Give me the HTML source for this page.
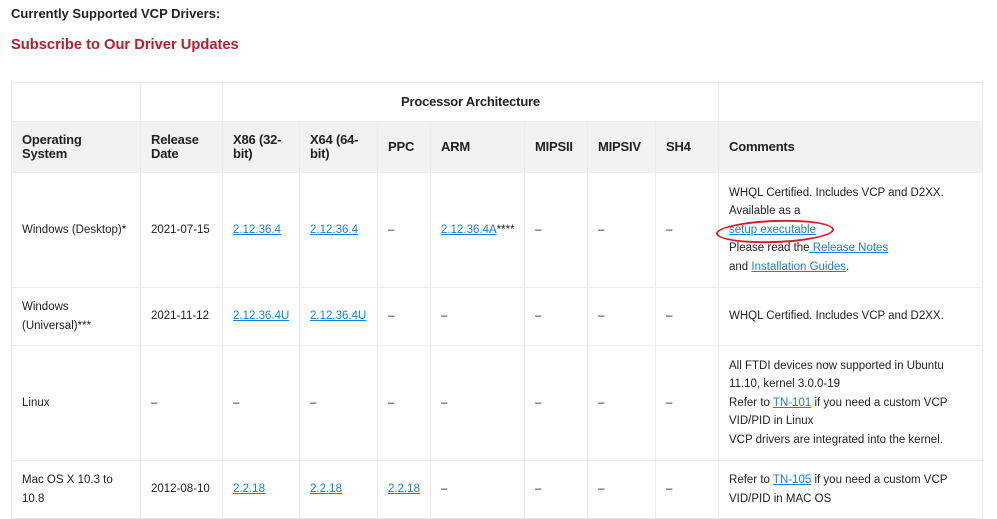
<!DOCTYPE html>
<html><head><style>
body{margin:0;background:#fff;font-family:"Liberation Sans",Arial,sans-serif;color:#222;width:997px;height:519px;overflow:hidden;position:relative}
h1{position:absolute;left:11px;top:6px;margin:0;font-size:13px;font-weight:bold;color:#222}
h2{position:absolute;left:11px;top:37px;margin:0;font-size:14.7px;font-weight:bold;color:#b5202a}
table{position:absolute;left:11px;top:82px;border-collapse:collapse;table-layout:fixed;width:971px}
td,th{border:1px solid #ececec;padding:0 0 0 10px;font-size:11.5px;line-height:18.5px;vertical-align:middle;text-align:left}
th{font-size:13px;font-weight:bold;line-height:14px;color:#222;letter-spacing:-0.2px}
tr.g th{background:#f2f2f2}
a{color:#1a80d8;text-decoration:underline}
.c{position:relative}
.oval{position:absolute;left:-13px;top:36px;width:114px;height:19px;border:2px solid #d81e25;border-radius:50%;transform:rotate(-2deg)}
</style></head><body>
<h1>Currently Supported VCP Drivers:</h1>
<h2>Subscribe to Our Driver Updates</h2>
<table>
<colgroup><col style="width:129px"><col style="width:82px"><col style="width:77px"><col style="width:78px"><col style="width:53px"><col style="width:94px"><col style="width:63px"><col style="width:68px"><col style="width:63px"><col style="width:264px"></colgroup>
<tr style="height:39px"><th></th><th></th><th colspan="7" style="text-align:center;padding:0">Processor Architecture</th><th></th></tr>
<tr class="g" style="height:51px"><th>Operating<br>System</th><th>Release<br>Date</th><th>X86 (32-<br>bit)</th><th>X64 (64-<br>bit)</th><th>PPC</th><th>ARM</th><th>MIPSII</th><th>MIPSIV</th><th>SH4</th><th>Comments</th></tr>
<tr style="height:115px"><td>Windows (Desktop)*</td><td>2021-07-15</td><td><a>2.12.36.4</a></td><td><a>2.12.36.4</a></td><td>–</td><td><a>2.12.36.4A</a>****</td><td>–</td><td>–</td><td>–</td><td><div class="c">WHQL Certified. Includes VCP and D2XX.<br>Available as a<br><a>setup executable</a><br>Please read the<a> Release Notes</a><br>and <a>Installation Guides</a>.<div class="oval"></div></div></td></tr>
<tr style="height:58px"><td>Windows<br>(Universal)***</td><td>2021-11-12</td><td><a>2.12.36.4U</a></td><td><a>2.12.36.4U</a></td><td>–</td><td>–</td><td>–</td><td>–</td><td>–</td><td>WHQL Certified. Includes VCP and D2XX.</td></tr>
<tr style="height:115px"><td>Linux</td><td>–</td><td>–</td><td>–</td><td>–</td><td>–</td><td>–</td><td>–</td><td>–</td><td>All FTDI devices now supported in Ubuntu<br>11.10, kernel 3.0.0-19<br>Refer to <a>TN-101</a> if you need a custom VCP<br>VID/PID in Linux<br>VCP drivers are integrated into the kernel.</td></tr>
<tr style="height:58px"><td>Mac OS X 10.3 to<br>10.8</td><td>2012-08-10</td><td><a>2.2.18</a></td><td><a>2.2.18</a></td><td><a>2.2.18</a></td><td>–</td><td>–</td><td>–</td><td>–</td><td>Refer to <a>TN-105</a> if you need a custom VCP<br>VID/PID in MAC OS</td></tr>
</table>
</body></html>
